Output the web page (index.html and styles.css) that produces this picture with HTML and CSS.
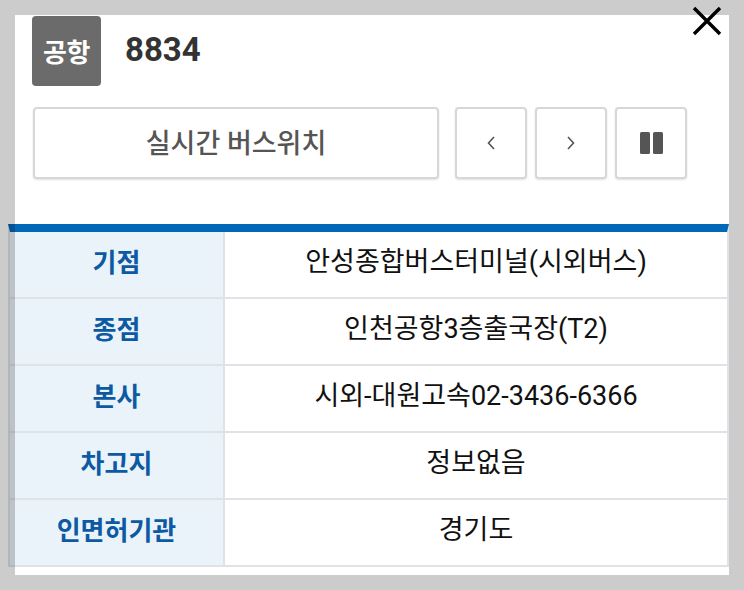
FILE: index.html
```html
<!DOCTYPE html>
<html lang="ko">
<head>
<meta charset="utf-8">
<title>8834</title>
<link rel="stylesheet" href="styles.css">
</head>
<body>
<div class="modal">
  <div class="head">
    <span class="badge">공항</span>
    <span class="route">8834</span>
  </div>
  <button class="close" aria-label="닫기">
    <svg width="32" height="32" viewBox="0 0 32 32"><path d="M3 3 L29 29 M29 3 L3 29" stroke="#000" stroke-width="3.4" fill="none"/></svg>
  </button>
  <div class="controls">
    <button class="btn btn-main">실시간 버스위치</button>
    <button class="btn btn-sq" aria-label="이전">
      <svg width="10" height="16" viewBox="0 0 10 16"><path d="M8 2 L2.5 8 L8 14" stroke="#555" stroke-width="1.6" fill="none"/></svg>
    </button>
    <button class="btn btn-sq" aria-label="다음">
      <svg width="10" height="16" viewBox="0 0 10 16"><path d="M2 2 L7.5 8 L2 14" stroke="#555" stroke-width="1.6" fill="none"/></svg>
    </button>
    <button class="btn btn-sq" aria-label="일시정지">
      <span class="pause"><i></i><i></i></span>
    </button>
  </div>
  <div class="info">
    <div class="row"><div class="th">기점</div><div class="td">안성종합버스터미널(시외버스)</div></div>
    <div class="row"><div class="th">종점</div><div class="td">인천공항3층출국장(T2)</div></div>
    <div class="row"><div class="th">본사</div><div class="td">시외-대원고속02-3436-6366</div></div>
    <div class="row"><div class="th">차고지</div><div class="td">정보없음</div></div>
    <div class="row"><div class="th">인면허기관</div><div class="td">경기도</div></div>
  </div>
</div>
</body>
</html>
```
FILE: styles.css
```css
* { box-sizing: border-box; }
html, body { margin: 0; padding: 0; }
body {
  background: #cccccc;
  font-family: "Roboto", "Noto Sans CJK KR", sans-serif;
  width: 744px;
  height: 590px;
  overflow: hidden;
}
.modal {
  position: relative;
  margin: 15px 0 0 15px;
  width: 714px;
  height: 560px;
  background: #fff;
  padding-top: 1px;
}
.head {
  display: flex;
  align-items: center;
  padding-left: 17px;
  gap: 24px;
}
.badge {
  width: 69px;
  height: 70px;
  border-radius: 4px;
  background: #6b6b6b;
  color: #fff;
  font-size: 26px;
  font-weight: 700;
  display: flex;
  align-items: center;
  justify-content: center;
  letter-spacing: -0.5px;
  padding-bottom: 2px;
}
.route {
  font-size: 33px;
  font-weight: 700;
  color: #333;
  margin-top: -4px;
}
.close {
  position: absolute;
  right: 6px;
  top: -10px;
  width: 32px;
  height: 32px;
  padding: 0;
  border: 0;
  background: transparent;
  display: block;
}
.close svg { display: block; }
.controls {
  display: flex;
  gap: 8px;
  margin-top: 21px;
  padding-left: 18px;
}
.btn {
  height: 72px;
  background: #fff;
  border: 2px solid #d7d7d7;
  border-radius: 4px;
  box-shadow: 0 1px 2px rgba(0,0,0,0.12);
  display: flex;
  align-items: center;
  justify-content: center;
  padding: 0;
  font-family: inherit;
}
.btn-main {
  width: 406px;
  margin-right: 8px;
  font-size: 27px;
  font-weight: 500;
  color: #555;
  padding-bottom: 4px;
}
.btn-sq { width: 72px; }
.btn-sq svg { display: block; }
.pause { display: flex; gap: 3px; }
.pause i {
  display: block;
  width: 10px;
  height: 22px;
  border-radius: 1.5px;
  background: #555;
}
.info {
  position: relative;
  margin-top: 45px;
  margin-left: -7px;
  width: 721px;
  border-top: 8px solid #0068b7;
  border-left: 2px solid #dfe3e8;
  border-right: 2px solid #dfe3e8;
}
.info::before {
  content: "";
  position: absolute;
  left: -2px;
  top: -8px;
  bottom: 0;
  width: 7px;
  background: rgba(0,0,0,0.2);
}
.row {
  display: grid;
  grid-template-columns: 215px 1fr;
  height: 67px;
  border-bottom: 2px solid #dfe3e8;
}
.th {
  background: #ebf3fa;
  border-right: 2px solid #dfe3e8;
  color: #0d5aa3;
  font-size: 26px;
  font-weight: 700;
  display: flex;
  align-items: center;
  justify-content: center;
  padding-bottom: 9px;
}
.td {
  color: #111;
  font-size: 27px;
  display: flex;
  align-items: center;
  justify-content: center;
  padding-bottom: 10px;
}
```
